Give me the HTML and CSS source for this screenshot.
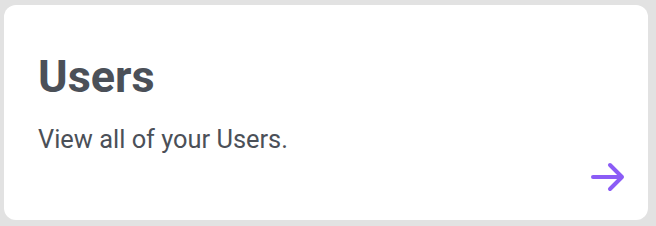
FILE: index.html
```html
<!DOCTYPE html>
<html>
<head>
<meta charset="utf-8">
<link rel="stylesheet" href="styles.css">
</head>
<body>
<div class="page">
  <div class="card">
    <h1 class="title">Users</h1>
    <p class="desc">View all of your Users.</p>
    <div class="foot">
      <svg class="arrow" viewBox="0 0 36 30" width="36" height="30" fill="none" stroke="#8b5cf6" stroke-width="4" stroke-linecap="round" stroke-linejoin="round">
        <path d="M3 15 H32 M20 3 L32 15 L20 27"/>
      </svg>
    </div>
  </div>
</div>
</body>
</html>
```

FILE: styles.css
```css
html, body {
  margin: 0;
  padding: 0;
}
body {
  background: #e2e2e2;
  font-family: Roboto, "Liberation Sans", sans-serif;
}
.page {
  width: 656px;
  height: 226px;
  padding: 5px 8px 6px 4px;
  box-sizing: border-box;
  display: flex;
}
.card {
  flex: 1;
  background: #ffffff;
  border-radius: 12px;
  padding: 0 22px 0 34px;
  display: flex;
  flex-direction: column;
}
.title {
  margin: 44px 0 0 0;
  font-size: 45px;
  font-weight: 700;
  line-height: 56px;
  color: #4b5058;
}
.desc {
  margin: 19px 0 0 0;
  font-size: 25.4px;
  line-height: 30px;
  color: #4b5058;
}
.foot {
  display: flex;
  justify-content: flex-end;
  margin-top: 8px;
}
.arrow {
  display: block;
}
```
